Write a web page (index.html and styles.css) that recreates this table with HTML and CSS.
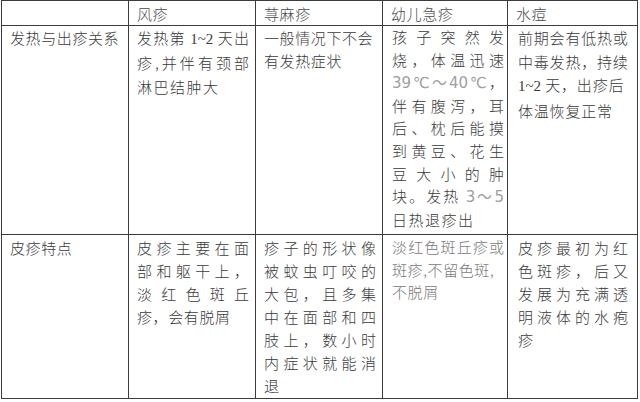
FILE: index.html
```html
<!DOCTYPE html>
<html lang="zh-CN">
<head>
<meta charset="utf-8">
<title>出疹性疾病比较</title>
<link rel="stylesheet" href="styles.css">
</head>
<body>
<div class="tbl">
  <div class="cell head"></div>
  <div class="cell head">风疹</div>
  <div class="cell head">荨麻疹</div>
  <div class="cell head">幼儿急疹</div>
  <div class="cell head">水痘</div>

  <div class="cell"><span class="ln">发热与出疹关系</span></div>
  <div class="cell c2a">
    <span class="ln j">发热第 <span class="serif">1~2</span> 天出</span>
    <span class="ln j">疹,并伴有颈部</span>
    <span class="ln wide">淋巴结肿大</span>
  </div>
  <div class="cell">
    <span class="ln">一般情况下不会</span>
    <span class="ln">有发热症状</span>
  </div>
  <div class="cell c4a">
    <span class="ln j">孩子突然发</span>
    <span class="ln j">烧，体温迅速</span>
    <span class="ln j"><span class="num">39℃～40℃</span>，</span>
    <span class="ln j">伴有腹泻，耳</span>
    <span class="ln j">后、枕后能摸</span>
    <span class="ln j">到黄豆、花生</span>
    <span class="ln j">豆大小的肿</span>
    <span class="ln j">块。发热 <span class="num">3～5</span></span>
    <span class="ln wide">日热退疹出</span>
  </div>
  <div class="cell c5 c5a">
    <span class="ln">前期会有低热或</span>
    <span class="ln">中毒发热，持续</span>
    <span class="ln"><span class="serif">1~2</span> 天，出疹后</span>
    <span class="ln">体温恢复正常</span>
  </div>

  <div class="cell r3"><span class="ln">皮疹特点</span></div>
  <div class="cell r3">
    <span class="ln j">皮疹主要在面</span>
    <span class="ln j">部和躯干上，</span>
    <span class="ln j">淡红色斑丘</span>
    <span class="ln">疹，会有脱屑</span>
  </div>
  <div class="cell r3">
    <span class="ln j">疹子的形状像</span>
    <span class="ln j">被蚊虫叮咬的</span>
    <span class="ln j">大包，且多集</span>
    <span class="ln j">中在面部和四</span>
    <span class="ln j">肢上，数小时</span>
    <span class="ln j">内症状就能消</span>
    <span class="ln">退</span>
  </div>
  <div class="cell r3 c4a light">
    <span class="ln j">淡红色斑丘疹或</span>
    <span class="ln">斑疹,不留色斑,</span>
    <span class="ln">不脱屑</span>
  </div>
  <div class="cell r3 c5">
    <span class="ln j">皮疹最初为红</span>
    <span class="ln j">色斑疹，后又</span>
    <span class="ln j">发展为充满透</span>
    <span class="ln j">明液体的水疱</span>
    <span class="ln">疹</span>
  </div>
</div>
</body>
</html>
```

FILE: styles.css
```css
html, body {
  margin: 0;
  padding: 0;
  background: #ffffff;
}

body {
  font-family: "Noto Sans CJK SC", "Noto Sans", sans-serif;
  font-weight: 300;
  font-size: 15px;
  color: #3a3a3a;
}

.tbl {
  display: grid;
  grid-template-columns: 126px 126px 126px 124px 129px;
  grid-template-rows: 24px 208px 163px;
  gap: 1px;
  background: #3c3c3c;
  border: 1px solid #3c3c3c;
  width: max-content;
  margin-left: 1px;
}

.cell {
  background: #ffffff;
  padding: 0 6px 0 8px;
  line-height: 23px;
  letter-spacing: 0.6px;
  overflow: hidden;
}

.head {
  padding-top: 1px;
  color: #4a4a4a;
}

.r3 {
  padding-top: 1px;
}

.c2a {
  line-height: 24px;
}

.c4a {
  padding-right: 3px;
  padding-left: 9px;
}

.c4a .ln {
  line-height: 22.6px;
}

.c5 {
  padding-left: 10px;
  padding-right: 9px;
  letter-spacing: 0.8px;
}

.c5a {
  line-height: 23.5px;
}

.ln {
  display: block;
  white-space: nowrap;
}

.j {
  text-align: justify;
  text-align-last: justify;
  letter-spacing: 0;
}

.wide {
  letter-spacing: 1.5px;
}

.serif {
  font-family: "Liberation Serif", serif;
  font-weight: 400;
  letter-spacing: 0;
}

.num {
  font-family: "DejaVu Sans", sans-serif;
  font-weight: 400;
  color: #a0a0a0;
  letter-spacing: 0;
}

.light {
  color: #7a7a7a;
}
```
